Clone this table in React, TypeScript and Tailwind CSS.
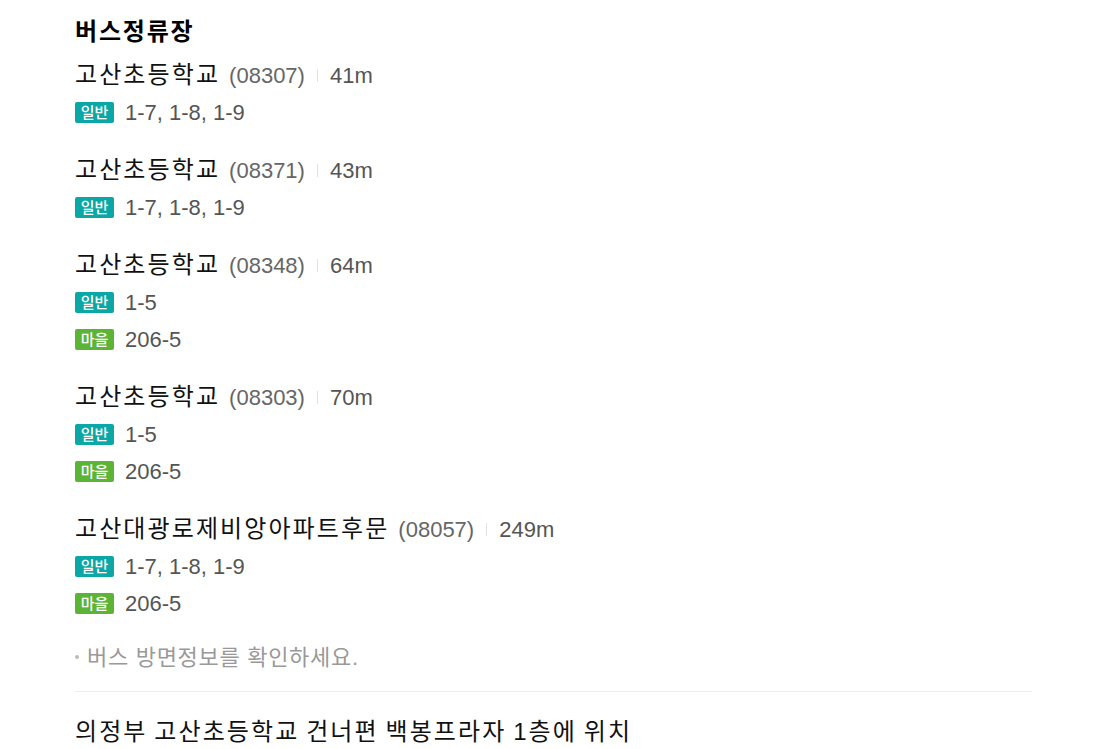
import React from 'react';

type Route = { kind: '일반' | '마을'; numbers: string };

interface Stop {
  name: string;
  code: string;
  distance: string;
  routes: Route[];
}

const STOPS: Stop[] = [
  { name: '고산초등학교', code: '08307', distance: '41m', routes: [{ kind: '일반', numbers: '1-7, 1-8, 1-9' }] },
  { name: '고산초등학교', code: '08371', distance: '43m', routes: [{ kind: '일반', numbers: '1-7, 1-8, 1-9' }] },
  {
    name: '고산초등학교',
    code: '08348',
    distance: '64m',
    routes: [
      { kind: '일반', numbers: '1-5' },
      { kind: '마을', numbers: '206-5' },
    ],
  },
  {
    name: '고산초등학교',
    code: '08303',
    distance: '70m',
    routes: [
      { kind: '일반', numbers: '1-5' },
      { kind: '마을', numbers: '206-5' },
    ],
  },
  {
    name: '고산대광로제비앙아파트후문',
    code: '08057',
    distance: '249m',
    routes: [
      { kind: '일반', numbers: '1-7, 1-8, 1-9' },
      { kind: '마을', numbers: '206-5' },
    ],
  },
];

function RouteBadge({ kind }: { kind: Route['kind'] }) {
  // 일반 = teal, 마을 = green
  return (
    <span
      className={`flex items-center justify-center w-[39px] h-[21px] rounded-[2px] text-white text-[15px] font-medium leading-none shrink-0 ${
        kind === '일반' ? 'bg-[#0aa7a6]' : 'bg-[#5bb436]'
      }`}
    >
      {kind}
    </span>
  );
}

function StopItem({ stop }: { stop: Stop }) {
  return (
    <li className="mb-[20px]">
      <div className="flex items-center h-[38px]">
        <span className="text-[24px] text-[#111] tracking-[2.1px]">{stop.name}</span>
        <span className="ml-[9px] text-[22px] text-[#666]">({stop.code})</span>
        <span className="mx-[12px] w-px h-[13px] bg-[#e2e2e2]" />
        <span className="text-[22px] text-[#555]">{stop.distance}</span>
      </div>
      {stop.routes.map((r, i) => (
        <div key={i} className="flex items-center h-[37px]">
          <RouteBadge kind={r.kind} />
          <span className="ml-[11px] text-[22px] text-[#555]">{r.numbers}</span>
        </div>
      ))}
    </li>
  );
}

export default function App() {
  return (
    <div className="min-h-screen bg-white font-['Liberation_Sans','Noto_Sans_CJK_KR',sans-serif]">
      <div className="ml-[75px] w-[957px] pt-[17px]">
        <h2 className="h-[30px] flex items-center text-[24px] font-bold text-black tracking-[1.8px]">버스정류장</h2>

        <ul className="mt-[9px]">
          {STOPS.map((s, i) => (
            <StopItem key={i} stop={s} />
          ))}
        </ul>

        <p className="flex items-center h-[30px] text-[22px] text-[#999] tracking-[0.7px]">
          <span className="w-[4px] h-[4px] rounded-full bg-[#bbb] mr-[8px]" />
          버스 방면정보를 확인하세요.
        </p>

        <div className="mt-[19px] h-px bg-[#eeeeee]" />

        <p className="mt-[25px] h-[30px] flex items-center text-[24px] text-[#111] tracking-[2.1px] [word-spacing:-2px]">
          의정부 고산초등학교 건너편 백봉프라자 1층에 위치
        </p>
      </div>
    </div>
  );
}
